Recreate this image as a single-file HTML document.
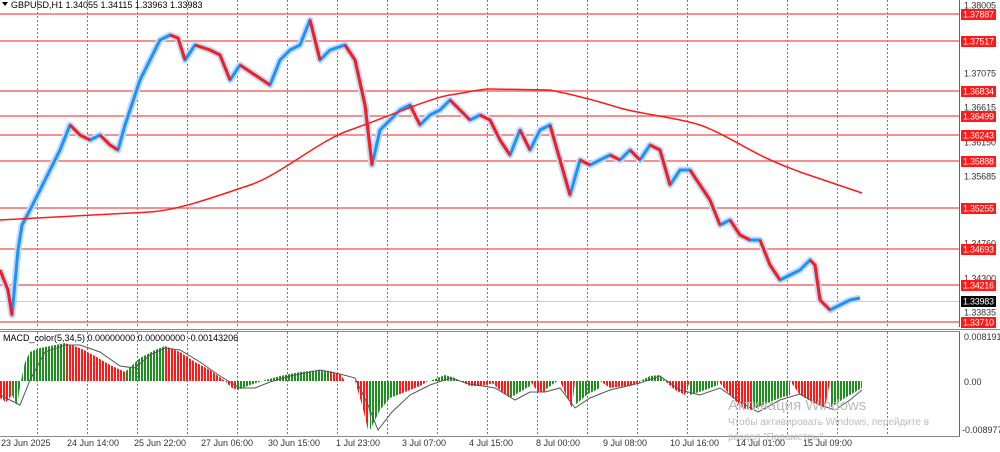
<!DOCTYPE html>
<html><head><meta charset="utf-8"><style>
html,body{margin:0;padding:0;background:#fff;width:1000px;height:452px;overflow:hidden}
svg text{font-family:"Liberation Sans","DejaVu Sans",sans-serif}
</style></head><body>
<svg width="1000" height="452" xmlns="http://www.w3.org/2000/svg">
<defs>
<pattern id="g" width="3" height="10" patternUnits="userSpaceOnUse"><rect width="2" height="10" fill="#1f8f1f"/></pattern>
<pattern id="r" width="3" height="10" patternUnits="userSpaceOnUse"><rect width="2" height="10" fill="#ff1a1a"/></pattern>
<pattern id="vg" width="50" height="4" patternUnits="userSpaceOnUse" x="37"><rect x="0" y="0" width="1" height="2" fill="#777"/></pattern>
</defs>
<rect x="37" y="0" width="900" height="436" fill="url(#vg)"/>
<g stroke="#f26b6b" stroke-width="1.4">
<line x1="0" y1="14" x2="960" y2="14"/><line x1="0" y1="41" x2="960" y2="41"/><line x1="0" y1="91" x2="960" y2="91"/><line x1="0" y1="116" x2="960" y2="116"/><line x1="0" y1="135" x2="960" y2="135"/><line x1="0" y1="161" x2="960" y2="161"/><line x1="0" y1="208" x2="960" y2="208"/><line x1="0" y1="249" x2="960" y2="249"/><line x1="0" y1="285" x2="960" y2="285"/><line x1="0" y1="322" x2="960" y2="322"/>
</g>
<line x1="0" y1="301.5" x2="960" y2="301.5" stroke="#ccc"/>
<path d="M0,270 L8,290 L12,315 L18,250 L22,225 L30,210 L40,190 L50,170 L60,150 L70,125 L80,135 L90,140 L100,135 L110,145 L118,150 L125,125 L130,110 L140,80 L150,60 L160,40 L170,35 L178,38 L185,60 L195,45 L210,50 L220,55 L230,80 L240,65 L255,75 L270,85 L280,60 L290,50 L300,45 L310,20 L320,60 L330,50 L345,45 L355,60 L365,105 L372,165 L380,130 L390,120 L400,110 L410,105 L420,125 L430,115 L440,110 L450,100 L460,110 L470,120 L480,115 L490,120 L500,140 L510,155 L520,130 L530,150 L540,130 L550,125 L560,160 L570,195 L580,160 L590,165 L600,160 L610,155 L620,160 L630,150 L640,160 L650,145 L660,150 L670,185 L680,170 L690,170 L700,185 L710,200 L720,225 L730,220 L740,235 L750,240 L760,240 L770,265 L780,280 L790,275 L800,270 L810,260 L815,265 L820,300 L830,310 L840,305 L850,300 L860,298" fill="none" stroke="#c2dcf7" stroke-width="7" stroke-linejoin="round"/>
<path d="M0,270 L8,290 L12,315 L18,250 L22,225 L30,210 L40,190 L50,170 L60,150 L70,125 L80,135 L90,140 L100,135 L110,145 L118,150 L125,125 L130,110 L140,80 L150,60 L160,40 L170,35 L178,38 L185,60 L195,45 L210,50 L220,55 L230,80 L240,65 L255,75 L270,85 L280,60 L290,50 L300,45 L310,20 L320,60 L330,50 L345,45 L355,60 L365,105 L372,165 L380,130 L390,120 L400,110 L410,105 L420,125 L430,115 L440,110 L450,100 L460,110 L470,120 L480,115 L490,120 L500,140 L510,155 L520,130 L530,150 L540,130 L550,125 L560,160 L570,195 L580,160 L590,165 L600,160 L610,155 L620,160 L630,150 L640,160 L650,145 L660,150 L670,185 L680,170 L690,170 L700,185 L710,200 L720,225 L730,220 L740,235 L750,240 L760,240 L770,265 L780,280 L790,275 L800,270 L810,260 L815,265 L820,300 L830,310 L840,305 L850,300 L860,298" fill="none" stroke="#1e90ff" stroke-width="3" stroke-linejoin="round"/>
<g fill="none" stroke="#ff1a1a" stroke-width="3" stroke-linejoin="round">
<path d="M0,270 L8,290 L12,315"/><path d="M70,125 L80,135 L90,140"/><path d="M100,135 L110,145 L118,150"/><path d="M170,35 L178,38 L185,60"/><path d="M195,45 L210,50 L220,55 L230,80"/><path d="M240,65 L255,75 L270,85"/><path d="M310,20 L320,60"/><path d="M345,45 L355,60 L365,105 L372,165"/><path d="M410,105 L420,125"/><path d="M450,100 L460,110 L470,120"/><path d="M480,115 L490,120 L500,140 L510,155"/><path d="M520,130 L530,150"/><path d="M550,125 L560,160 L570,195"/><path d="M580,160 L590,165"/><path d="M610,155 L620,160"/><path d="M630,150 L640,160"/><path d="M650,145 L660,150 L670,185"/><path d="M690,170 L700,185 L710,200 L720,225"/><path d="M730,220 L740,235 L750,240"/><path d="M760,240 L770,265 L780,280"/><path d="M810,260 L815,265 L820,300 L830,310"/>
</g>
<path d="M0,220 C60,217 120,214 150,212 S220,195 250,185 S320,140 350,130 S430,98 450,95 S480,89 490,89 L550,90 C580,96 600,102 620,108 S680,118 700,125 S740,145 760,155 S790,168 800,172 L862,193" fill="none" stroke="#ff1a1a" stroke-width="1.5"/>
<line x1="959.5" y1="0" x2="959.5" y2="436" stroke="#666"/>
<g font-size="9" fill="#333">
<text x="964" y="8.5" textLength="32">1.38005</text><text x="964" y="76.5" textLength="32">1.37075</text><text x="964" y="110.5" textLength="32">1.36615</text><text x="964" y="145.5" textLength="32">1.36150</text><text x="964" y="179.5" textLength="32">1.35685</text><text x="964" y="246.5" textLength="32">1.34760</text><text x="964" y="281.5" textLength="32">1.34300</text><text x="964" y="315.5" textLength="32">1.33835</text>
</g>
<g fill="#ff1a1a">
<rect x="961" y="9" width="35" height="11"/><rect x="961" y="36" width="35" height="11"/><rect x="961" y="86" width="35" height="11"/><rect x="961" y="111" width="35" height="11"/><rect x="961" y="130" width="35" height="11"/><rect x="961" y="156" width="35" height="11"/><rect x="961" y="203" width="35" height="11"/><rect x="961" y="244" width="35" height="11"/><rect x="961" y="280" width="35" height="11"/><rect x="961" y="317" width="35" height="11"/>
</g>
<rect x="961" y="296" width="35" height="11" fill="#000"/>
<g font-size="9" fill="#fff">
<text x="963" y="17.5" textLength="31">1.37887</text><text x="963" y="44.5" textLength="31">1.37517</text><text x="963" y="94.5" textLength="31">1.36834</text><text x="963" y="119.5" textLength="31">1.36499</text><text x="963" y="138.5" textLength="31">1.36243</text><text x="963" y="164.5" textLength="31">1.35888</text><text x="963" y="211.5" textLength="31">1.35255</text><text x="963" y="252.5" textLength="31">1.34693</text><text x="963" y="288.5" textLength="31">1.34216</text><text x="963" y="325.5" textLength="31">1.33710</text><text x="963" y="304.5" textLength="31">1.33983</text>
</g>
<path d="M2,2 L8,2 L5,6Z" fill="#000"/>
<text x="11" y="8" font-size="9" fill="#000">GBPUSD,H1  1.34055 1.34115 1.33963 1.33983</text>
<rect x="0" y="327" width="960" height="4" fill="#fff"/>
<line x1="0" y1="329.5" x2="1000" y2="329.5" stroke="#888"/><line x1="0" y1="331.5" x2="960" y2="331.5" stroke="#888"/>
<line x1="0" y1="436.5" x2="960" y2="436.5" stroke="#888"/>
<g>
<path fill="url(#r)" d="M0,381 L0,398 L6,402 L12,395 L12,381Z"/>
<path fill="url(#g)" d="M12,381 L12,395 L17,405 L21,381Z"/>
<path fill="url(#g)" d="M21,381 L25,362 L30,352 L40,348 L55,345 L65,343 L65,381Z"/>
<path fill="url(#r)" d="M65,381 L65,343 L80,348 L95,356 L110,365 L125,372 L125,381Z"/>
<path fill="url(#g)" d="M125,381 L125,372 L140,358 L155,350 L165,346 L165,381Z"/>
<path fill="url(#r)" d="M165,381 L165,346 L180,352 L195,362 L210,370 L225,381Z"/>
<path fill="url(#r)" d="M225,381 L232,388 L238,390 L238,381Z"/>
<path fill="url(#g)" d="M238,381 L238,390 L250,385 L262,381Z"/>
<path fill="url(#g)" d="M262,381 L280,376 L300,372 L320,370 L330,371 L330,381Z"/>
<path fill="url(#r)" d="M330,381 L330,371 L340,374 L345,381Z"/>
<path fill="url(#r)" d="M355,381 L362,405 L368,430 L372,381Z"/>
<path fill="url(#g)" d="M370,381 L370,430 L380,410 L390,398 L400,394 L400,381Z"/>
<path fill="url(#r)" d="M400,381 L400,394 L410,390 L420,386 L428,381Z"/>
<path fill="url(#g)" d="M430,381 L445,375 L455,378 L460,381Z"/>
<path fill="url(#r)" d="M460,381 L470,386 L480,386 L490,384 L495,381Z"/>
<path fill="url(#r)" d="M490,381 L500,390 L510,398 L510,381Z"/>
<path fill="url(#g)" d="M510,381 L510,398 L520,392 L530,386 L530,381Z"/>
<path fill="url(#r)" d="M530,381 L538,392 L545,392 L545,381Z"/>
<path fill="url(#g)" d="M545,381 L545,390 L553,384 L558,381Z"/>
<path fill="url(#r)" d="M560,381 L566,395 L572,408 L575,381Z"/>
<path fill="url(#g)" d="M575,381 L575,405 L588,394 L600,388 L600,381Z"/>
<path fill="url(#r)" d="M600,381 L610,388 L625,386 L640,383 L640,381Z"/>
<path fill="url(#g)" d="M640,381 L650,376 L660,375 L665,381Z"/>
<path fill="url(#r)" d="M665,381 L675,390 L685,395 L690,381Z"/>
<path fill="url(#g)" d="M690,381 L690,395 L705,390 L718,385 L718,381Z"/>
<path fill="url(#r)" d="M718,381 L730,395 L742,408 L752,410 L752,381Z"/>
<path fill="url(#g)" d="M752,381 L752,410 L765,404 L780,398 L790,395 L790,381Z"/>
<path fill="url(#r)" d="M790,381 L800,395 L812,402 L825,408 L830,381Z"/>
<path fill="url(#g)" d="M830,381 L830,408 L845,398 L855,392 L862,388 L862,381Z"/>
</g>
<path d="M0,395 L10,400 L20,405 L30,380 L45,352 L65,345 L80,345 L100,352 L120,366 L135,368 L150,355 L165,348 L180,350 L200,362 L220,376 L240,388 L255,388 L270,382 L290,376 L320,370 L340,374 L355,378 L368,405 L378,430 L392,412 L410,395 L430,385 L450,378 L470,384 L495,388 L515,400 L530,392 L545,392 L560,388 L575,408 L590,398 L610,390 L640,383 L660,376 L680,390 L700,395 L720,388 L740,402 L758,412 L780,400 L800,394 L820,405 L835,410 L850,400 L862,390" fill="none" stroke="#555" stroke-width="1"/>
<text x="3" y="341" font-size="9" fill="#000">MACD_color(5,34,5) 0.00000000 0.00000000 -0.00143206</text>
<g font-size="9" fill="#333"><text x="964" y="340">0.0081911</text><text x="964" y="385">0.00</text><text x="962" y="433">-0.0089774</text></g>
<text x="728" y="410" font-size="15" fill="#bbb">Активация Windows</text>
<text x="728" y="425" font-size="10" fill="#bbb">Чтобы активировать Windows, перейдите в</text>
<text x="728" y="440" font-size="10" fill="#bbb">раздел "Параметры".</text>
<g font-size="9" fill="#333">
<text x="1" y="446">23 Jun 2025</text><text x="67" y="446">24 Jun 14:00</text><text x="134" y="446">25 Jun 22:00</text><text x="201" y="446">27 Jun 06:00</text><text x="268" y="446">30 Jun 15:00</text><text x="336" y="446">1 Jul 23:00</text><text x="402" y="446">3 Jul 07:00</text><text x="469" y="446">4 Jul 15:00</text><text x="536" y="446">8 Jul 00:00</text><text x="603" y="446">9 Jul 08:00</text><text x="670" y="446">10 Jul 16:00</text><text x="736" y="446">14 Jul 01:00</text><text x="803" y="446">15 Jul 09:00</text>
</g>
</svg>
</body></html>
